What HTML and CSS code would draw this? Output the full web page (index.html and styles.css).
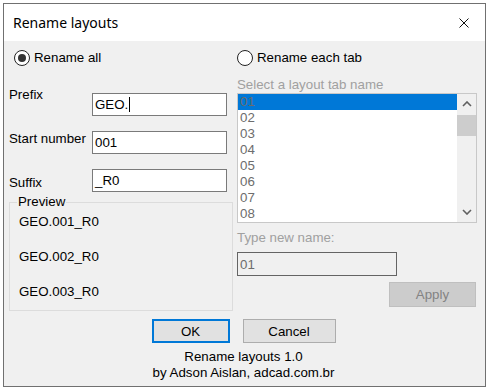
FILE: index.html
```html
<!DOCTYPE html>
<html lang="en">
<head>
    <meta charset="UTF-8">
    <title>Rename layouts</title>
    <link rel="stylesheet" href="styles.css">
</head>
<body>
    <div class="window">
        <div class="titlebar">
            <span class="title">Rename layouts</span>
            <svg class="close" width="10" height="10" viewBox="0 0 10 10">
                <path d="M0.5 0.5 L9.5 9.5 M9.5 0.5 L0.5 9.5" stroke="#111" stroke-width="1" fill="none"/>
            </svg>
        </div>

        <div class="content">
            <div class="columns">
                <!-- left: rename all -->
                <div class="col-left">
                    <div class="radio radio-left"><span class="radio-mark checked"></span>Rename all</div>

                    <div class="field field-prefix">
                        <span class="field-label">Prefix</span>
                        <div class="textbox">GEO.<span class="caret"></span></div>
                    </div>
                    <div class="field field-start">
                        <span class="field-label">Start number</span>
                        <div class="textbox">001</div>
                    </div>
                    <div class="field field-suffix">
                        <span class="field-label">Suffix</span>
                        <div class="textbox">_R0</div>
                    </div>

                    <fieldset class="preview">
                        <legend>Preview</legend>
                        <div class="preview-item">GEO.001_R0</div>
                        <div class="preview-item">GEO.002_R0</div>
                        <div class="preview-item">GEO.003_R0</div>
                    </fieldset>
                </div>

                <!-- right: rename each tab -->
                <div class="col-right">
                    <div class="radio"><span class="radio-mark"></span>Rename each tab</div>

                    <div class="hint hint-list">Select a layout tab name</div>
                    <div class="listbox">
                        <div class="list-items">
                            <div class="list-item selected">01</div>
                            <div class="list-item">02</div>
                            <div class="list-item">03</div>
                            <div class="list-item">04</div>
                            <div class="list-item">05</div>
                            <div class="list-item">06</div>
                            <div class="list-item">07</div>
                            <div class="list-item">08</div>
                        </div>
                        <div class="scrollbar">
                            <div class="scroll-btn">
                                <svg width="10" height="6" viewBox="0 0 10 6"><path d="M1 5 L5 1 L9 5" stroke="#606060" stroke-width="1.6" fill="none"/></svg>
                            </div>
                            <div class="scroll-track"><div class="scroll-thumb"></div></div>
                            <div class="scroll-btn">
                                <svg width="10" height="6" viewBox="0 0 10 6"><path d="M1 1 L5 5 L9 1" stroke="#606060" stroke-width="1.6" fill="none"/></svg>
                            </div>
                        </div>
                    </div>

                    <div class="hint hint-name">Type new name:</div>
                    <div class="textbox textbox-disabled">01</div>
                    <button class="btn btn-apply">Apply</button>
                </div>
            </div>

            <div class="buttons">
                <button class="btn btn-ok">OK</button>
                <button class="btn btn-cancel">Cancel</button>
            </div>

            <div class="footer">
                Rename layouts 1.0<br>
                by Adson Aislan, adcad.com.br
            </div>
        </div>
    </div>
</body>
</html>
```

FILE: styles.css
```css
* {
    margin: 0;
    padding: 0;
    box-sizing: border-box;
}

body {
    background: #ffffff;
    padding: 3px;
    font-family: 'Liberation Sans', Arial, sans-serif;
    font-size: 13.3px;
    color: #000;
}

.window {
    width: 483px;
    height: 384px;
    border: 1px solid #707070;
    background: #f0f0f0;
    display: flex;
    flex-direction: column;
}

/* title bar */
.titlebar {
    height: 37px;
    background: #fff;
    display: flex;
    align-items: center;
    justify-content: space-between;
    padding: 0 16px 0 9px;
}

.title {
    font-family: 'Noto Sans', sans-serif;
    font-size: 14px;
    color: #000;
}

.close {
    display: block;
}

/* main area */
.content {
    flex: 1;
    padding: 9px 7px 0 5px;
    display: flex;
    flex-direction: column;
}

.columns {
    display: flex;
    gap: 4px;
}

.col-left {
    width: 224px;
    display: flex;
    flex-direction: column;
}

.col-right {
    width: 240px;
    display: flex;
    flex-direction: column;
}

/* radio buttons */
.radio {
    height: 16px;
    display: flex;
    align-items: center;
    line-height: 16px;
}

.radio-left {
    margin-left: 5px;
}

.radio-mark {
    width: 16px;
    height: 16px;
    border: 1px solid #222;
    border-radius: 50%;
    background: #fff;
    margin-right: 4px;
    display: flex;
    align-items: center;
    justify-content: center;
}

.radio-mark.checked::after {
    content: "";
    width: 8px;
    height: 8px;
    border-radius: 50%;
    background: #333;
}

/* text fields */
.field {
    display: flex;
    align-items: flex-start;
    margin-top: 15px;
}

.field-prefix {
    margin-top: 27px;
}

.field-label {
    width: 83px;
    line-height: 15px;
}

.field-prefix .field-label {
    margin-top: -6px;
}

.field-suffix .field-label {
    margin-top: 6px;
}

.textbox {
    width: 135px;
    height: 23px;
    border: 1px solid #7a7a7a;
    background: #fff;
    padding: 0 2px;
    line-height: 21px;
    display: flex;
    align-items: center;
}

.caret {
    width: 1px;
    height: 15px;
    background: #000;
    margin-left: 1px;
}

/* preview group */
.preview {
    margin-top: 3px;
    height: 116px;
    border: 1px solid #dcdcdc;
    padding: 0 0 0 7px;
}

.preview legend {
    padding: 0 1px;
    line-height: 14px;
}

.preview-item {
    line-height: 15px;
    margin-top: 20px;
    padding-left: 2px;
}

.preview-item:first-of-type {
    margin-top: 5px;
}

/* right column */
.hint {
    color: #a0a0a0;
    line-height: 15px;
}

.hint-list {
    margin-top: 11px;
}

.hint-name {
    margin-top: 7px;
}

.listbox {
    margin-top: 1px;
    height: 130px;
    border: 1px solid #c8c8c8;
    background: #fff;
    display: flex;
}

.list-items {
    flex: 1;
}

.list-item {
    height: 16px;
    line-height: 16px;
    padding-left: 2px;
    color: #6d6d6d;
}

.list-item.selected {
    background: #0078d7;
    color: #6b6b6b;
}

.scrollbar {
    width: 19px;
    background: #f0f0f0;
    display: flex;
    flex-direction: column;
}

.scroll-btn {
    height: 20px;
    display: flex;
    align-items: center;
    justify-content: center;
}

.scroll-btn svg {
    display: block;
}

.scroll-track {
    flex: 1;
    padding-top: 1px;
}

.scroll-thumb {
    height: 21px;
    background: #cdcdcd;
}

.textbox-disabled {
    width: 160px;
    height: 24px;
    margin-top: 7px;
    background: #f0f0f0;
    border-color: #646464;
    color: #6d6d6d;
}

/* buttons */
.btn {
    font-family: 'Liberation Sans', Arial, sans-serif;
    font-size: 13.3px;
    color: #000;
    background: #e1e1e1;
    border: 1px solid #adadad;
    height: 24px;
}

.btn-apply {
    align-self: flex-end;
    margin: 6px 1px 0 0;
    width: 87px;
    height: 25px;
    background: #cccccc;
    border-color: #bfbfbf;
    color: #838383;
}

.buttons {
    margin-top: 8px;
    display: flex;
    justify-content: center;
    gap: 13px;
}

.btn-ok {
    width: 78px;
    border: 2px solid #0078d7;
}

.btn-cancel {
    width: 93px;
}

.footer {
    margin-top: 6px;
    text-align: center;
    line-height: 16px;
}
```
